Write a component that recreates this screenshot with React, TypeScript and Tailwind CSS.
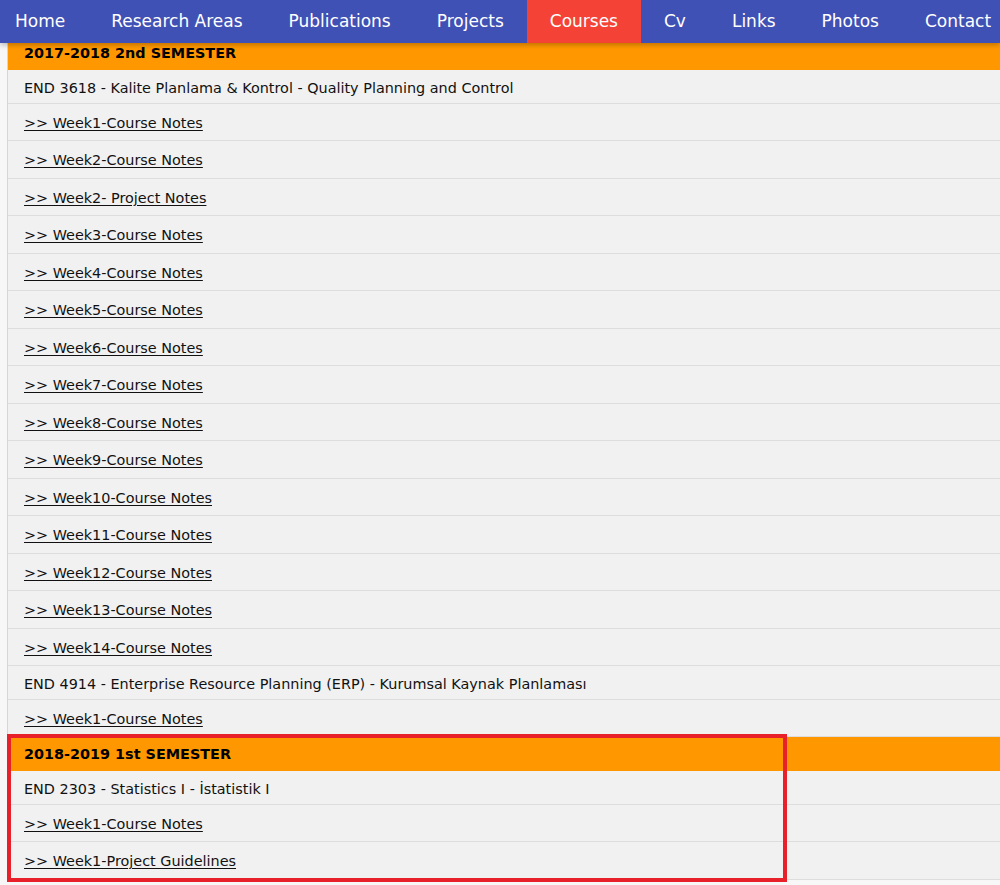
const NAV = ['Home', 'Research Areas', 'Publications', 'Projects', 'Courses', 'Cv', 'Links', 'Photos', 'Contact']

type Row = { kind: 'head' | 'course' | 'link'; text: string }

const weeks = ['Week1-Course Notes', 'Week2-Course Notes', 'Week2- Project Notes']
for (let i = 3; i <= 14; i++) weeks.push(`Week${i}-Course Notes`)

const FIRST: Row[] = [
  { kind: 'course', text: 'END 3618 - Kalite Planlama & Kontrol - Quality Planning and Control' },
  ...weeks.map(w => ({ kind: 'link' as const, text: `>> ${w}` })),
  { kind: 'course', text: 'END 4914 - Enterprise Resource Planning (ERP) - Kurumsal Kaynak Planlaması' },
  { kind: 'link', text: '>> Week1-Course Notes' },
]

const SECOND: Row[] = [
  { kind: 'course', text: 'END 2303 - Statistics I - İstatistik I' },
  { kind: 'link', text: '>> Week1-Course Notes' },
  { kind: 'link', text: '>> Week1-Project Guidelines' },
]

function RowItem({ row, i }: { row: Row; i: number }) {
  if (row.kind === 'course') {
    return (
      <div className="h-[34px] flex items-center px-4 pt-[4px] border-b border-[#dddddd] text-[#111]">
        {row.text}
      </div>
    )
  }
  return (
    <div className={`${i % 2 ? 'h-[37px]' : 'h-[38px]'} flex items-center px-4 pt-[3px] border-b border-[#dddddd]`}>
      <a href="#" className="underline underline-offset-2 text-[#111]">{row.text}</a>
    </div>
  )
}

function Header({ text }: { text: string }) {
  return (
    <div className="h-[34px] flex items-center px-4 pt-[2px] bg-[#ff9800] font-bold text-black">{text}</div>
  )
}

export default function App() {
  return (
    <div className="h-[885px] w-[1000px] overflow-hidden bg-[#f7f7f7] text-[14.4px]" style={{ fontFamily: '"DejaVu Sans", Verdana, sans-serif' }}>
      <nav className="relative z-10 h-[43px] flex bg-[#3f51b5] text-white text-[17px] shadow-[0_2px_5px_rgba(0,0,0,0.25)] whitespace-nowrap">
        {NAV.map((n, i) => (
          <a key={n} href="#"
            className={`flex items-center px-[23px] ${i === 0 ? '-ml-[8px]' : ''} ${n === 'Courses' ? 'bg-[#f44336]' : ''}`}>
            {n}
          </a>
        ))}
      </nav>

      <div className="ml-[7px] -mt-[7px] border-l border-[#d6d6d6] bg-[#f1f1f1] whitespace-nowrap">
        <Header text="2017-2018 2nd SEMESTER" />
        {FIRST.map((r, i) => <RowItem key={i} row={r} i={i} />)}
        <div className="relative">
          <Header text="2018-2019 1st SEMESTER" />
          {SECOND.map((r, i) => <RowItem key={i} row={r} i={i} />)}
          <div className="absolute -left-px -top-[3px] w-[780px] h-[148px] border-4 border-[#e8202a] pointer-events-none" />
        </div>
      </div>
    </div>
  )
}
